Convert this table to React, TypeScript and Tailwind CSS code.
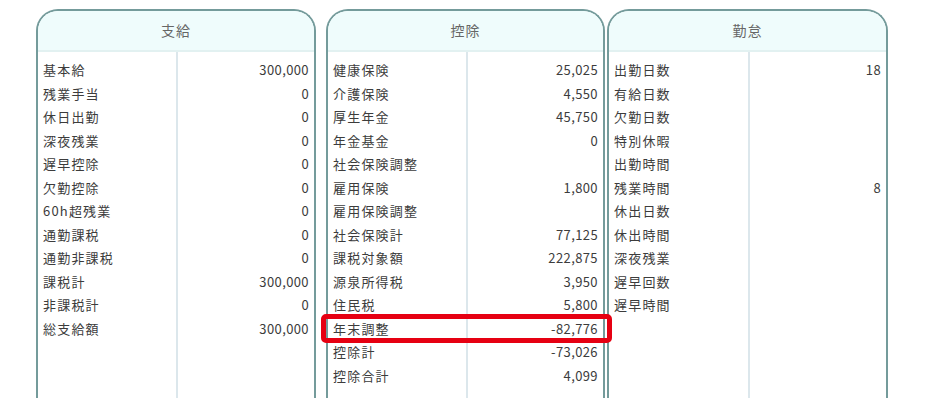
type Row = { label: string; value?: string }

const shikyu: Row[] = [
  { label: '基本給', value: '300,000' },
  { label: '残業手当', value: '0' },
  { label: '休日出勤', value: '0' },
  { label: '深夜残業', value: '0' },
  { label: '遅早控除', value: '0' },
  { label: '欠勤控除', value: '0' },
  { label: '60h超残業', value: '0' },
  { label: '通勤課税', value: '0' },
  { label: '通勤非課税', value: '0' },
  { label: '課税計', value: '300,000' },
  { label: '非課税計', value: '0' },
  { label: '総支給額', value: '300,000' },
]

const kojo: Row[] = [
  { label: '健康保険', value: '25,025' },
  { label: '介護保険', value: '4,550' },
  { label: '厚生年金', value: '45,750' },
  { label: '年金基金', value: '0' },
  { label: '社会保険調整' },
  { label: '雇用保険', value: '1,800' },
  { label: '雇用保険調整' },
  { label: '社会保険計', value: '77,125' },
  { label: '課税対象額', value: '222,875' },
  { label: '源泉所得税', value: '3,950' },
  { label: '住民税', value: '5,800' },
  { label: '年末調整', value: '-82,776' },
  { label: '控除計', value: '-73,026' },
  { label: '控除合計', value: '4,099' },
]

const kintai: Row[] = [
  { label: '出勤日数', value: '18' },
  { label: '有給日数' },
  { label: '欠勤日数' },
  { label: '特別休暇' },
  { label: '出勤時間' },
  { label: '残業時間', value: '8' },
  { label: '休出日数' },
  { label: '休出時間' },
  { label: '深夜残業' },
  { label: '遅早回数' },
  { label: '遅早時間' },
]

const Panel = ({
  title,
  rows,
  width,
  highlight,
}: {
  title: string
  rows: Row[]
  width: string
  highlight?: string
}) => {
  return (
    <div className={`relative flex flex-col h-[420px] ${width} shrink-0 rounded-t-[22px] border-2 border-b-0 border-[#749b9b] bg-white`}>
      <div className="h-[41px] shrink-0 flex items-center justify-center rounded-t-[20px] bg-[#effcfc] border-b-2 border-[#e2f1f1] text-[14px] text-[#666] tracking-[1px]">
        {title}
      </div>
      <div className="relative flex-1 pt-[6px]">
        <div className="absolute top-0 bottom-0 left-1/2 w-[2px] bg-[#dce7ec]" />
        {rows.map((row) => (
          <div key={row.label} className="relative grid grid-cols-2 h-[23.5px] items-center text-[13px] text-[#3c3c3c]">
            <div className="pl-[5px] tracking-[1.2px]">{row.label}</div>
            <div className="pr-[5px] text-right tracking-[0.4px]">{row.value ?? ''}</div>
            {highlight === row.label && (
              <div className="absolute -left-[7px] -right-[9px] -top-[3px] -bottom-[3px] z-10 rounded-[5px] border-[5px] border-[#e60012]" />
            )}
          </div>
        ))}
      </div>
    </div>
  )
}

export default function App() {
  return (
    <div
      className="w-[933px] h-[398px] overflow-hidden bg-white pt-[9px] pl-[36px] flex items-start"
      style={{ fontFamily: '"Noto Sans CJK JP", "Noto Sans", sans-serif' }}
    >
      <Panel title="支給" rows={shikyu} width="w-[280px]" />
      <div className="w-[10px] shrink-0" />
      <div className="relative z-10">
        <Panel title="控除" rows={kojo} width="w-[279px]" highlight="年末調整" />
      </div>
      <div className="w-[2px] shrink-0" />
      <Panel title="勤怠" rows={kintai} width="w-[281px]" />
    </div>
  )
}
